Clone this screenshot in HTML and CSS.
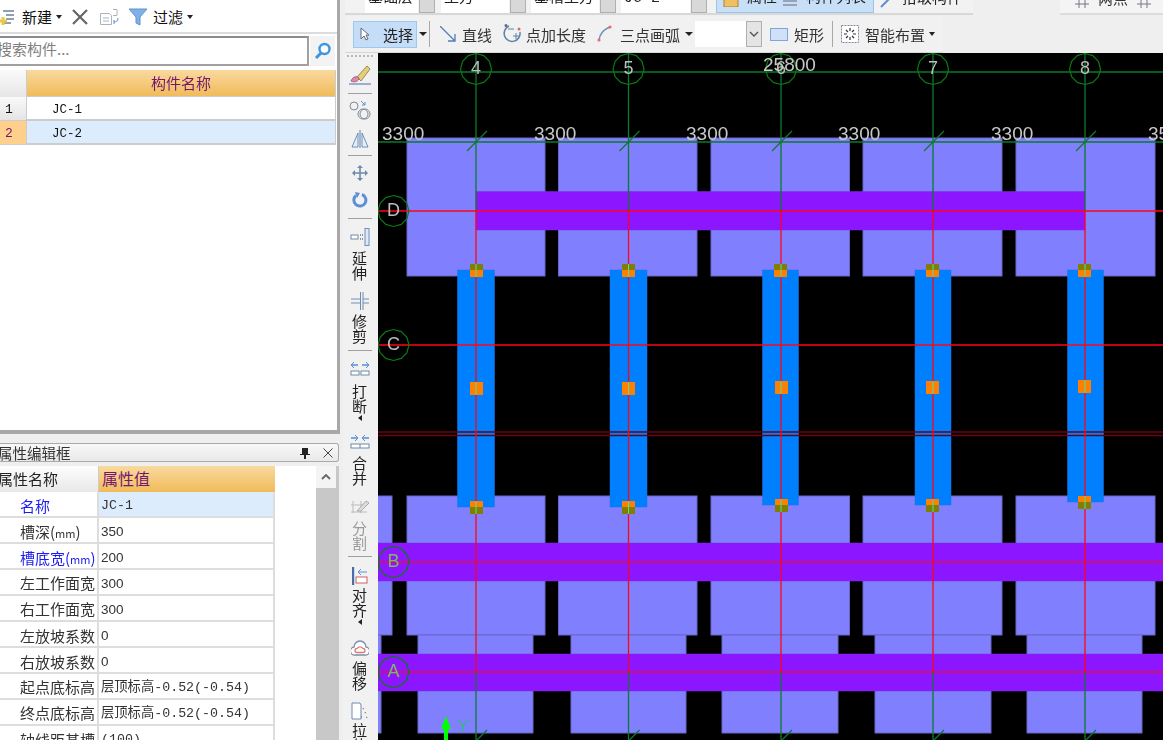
FILE: index.html
```html
<!DOCTYPE html>
<html lang="zh">
<head>
<meta charset="utf-8">
<title>构件</title>
<link rel="stylesheet" href="styles.css">
</head>
<body>
<div class="app">
  <aside class="side">
    <section class="list-panel">
      <div class="list-tools">
        <svg class="ic new-ic" viewBox="0 0 17 20"><path d="M3 4h11M6 8h8M6 12h8M3 16h8" stroke="#6b7f99" stroke-width="1.5"/><path d="M3 10v8M-1 14h8" stroke="#e9c94a" stroke-width="3"/></svg>
        <span class="t new-t">新建</span><i class="caret c-new"></i>
        <svg class="ic del-ic" viewBox="0 0 18 18"><path d="M2 2l14 14M16 2L2 16" stroke="#666" stroke-width="2.2"/></svg>
        <svg class="ic copy-ic" viewBox="0 0 20 18"><path d="M1.500 5.500h9l2 2v9h-11z" fill="#fff" stroke="#aab4c0"/><path d="M4 10h6M4 13h6" stroke="#aab4c0"/><path d="M14 1.500h4v6h-4" fill="none" stroke="#aab4c0"/><path d="M19 10c0 3-2 4-4 4M15 12v4" fill="none" stroke="#5b8fd0"/></svg>
        <svg class="ic filter-ic" viewBox="0 0 18 18"><path d="M0 1h18l-7 8v8l-4-2V9z" fill="#7fb0e6" stroke="#5f93cf"/></svg>
        <span class="t filter-t">过滤</span><i class="caret c-filter"></i>
      </div>
      <div class="search-row">
        <div class="search-box">搜索构件...</div>
        <div class="search-btn"><svg viewBox="0 0 18 18"><circle cx="10.500" cy="7" r="5" fill="#fff" stroke="#3d96e0" stroke-width="2.400"/><path d="M7 11l-5 5" stroke="#3d96e0" stroke-width="3"/></svg></div>
      </div>
      <div class="list-grid">
        <div class="lg-corner"></div><div class="lg-head">构件名称</div>
        <div class="lg-num">1</div><div class="lg-name">JC-1</div>
        <div class="lg-num lg-num-on">2</div><div class="lg-name lg-name-on">JC-2</div>
      </div>
    </section>
    <section class="prop-panel">
      <div class="prop-title"><span class="prop-title-t">属性编辑框</span>
        <svg class="pin" viewBox="0 0 10 12"><path d="M2 1h6v6h2v1H6v4H4V8H0V7h2z" fill="#222"/></svg>
        <svg class="close" viewBox="0 0 10 10"><path d="M.5.500l9 9M9.500.500l-9 9" stroke="#444"/></svg>
      </div>
      <div class="prop-body">
        <div class="prop-table">
          <div class="ph-name">属性名称</div><div class="ph-val">属性值</div>
          <div class="pn blue">名称</div><div class="pv pv-on mono">JC-1</div>
          <div class="pn">槽深(<small>mm</small>)</div><div class="pv">350</div>
          <div class="pn blue">槽底宽(<small>mm</small>)</div><div class="pv">200</div>
          <div class="pn up">左工作面宽</div><div class="pv">300</div>
          <div class="pn up">右工作面宽</div><div class="pv">300</div>
          <div class="pn">左放坡系数</div><div class="pv">0</div>
          <div class="pn">右放坡系数</div><div class="pv">0</div>
          <div class="pn up">起点底标高</div><div class="pv mono">层顶标高-0.52(-0.54)</div>
          <div class="pn up">终点底标高</div><div class="pv mono">层顶标高-0.52(-0.54)</div>
          <div class="pn">轴线距基槽</div><div class="pv mono">(100)</div>
        </div>
        <div class="scrollbar"><div class="sb-up"><svg viewBox="0 0 10 6"><path d="M1 5l4-4 4 4" fill="none" stroke="#666" stroke-width="1.800"/></svg></div><div class="sb-track"></div></div>
      </div>
    </section>
  </aside>
  <main class="main">
    <div class="top-row">
      <div class="top-left">
        <div class="combo c1"><span>基础层</span></div><div class="combo-btn"></div>
        <div class="combo c2"><span>土方</span></div><div class="combo-btn"></div>
        <div class="combo c3"><span>基槽土方</span></div><div class="combo-btn"></div>
        <div class="combo c4"><span>JC-2</span></div><div class="combo-btn"></div>
        <div class="top-sel">
          <svg class="i16" viewBox="0 0 16 12"><rect x="1" y="0" width="14" height="12" fill="#f0c060" stroke="#b08030"/></svg><span class="ts1">属性</span>
          <svg class="i16 ts-ic" viewBox="0 0 16 12"><path d="M1 2h14M1 6h14M1 10h14" stroke="#667"/></svg><span class="ts2">构件列表</span>
        </div>
        <svg class="i16 pick-ic" viewBox="0 0 16 12"><path d="M2 11l10-10" stroke="#5b8fd0" stroke-width="2"/></svg><span class="pick-t">拾取构件</span>
      </div>
      <div class="top-right">
        <svg class="i16" viewBox="0 0 16 12"><path d="M1 3h14M1 8h14M5 0v12M11 0v12" stroke="#778"/></svg><span class="tr1">两点</span>
        <svg class="i16 tr-ic" viewBox="0 0 16 12"><path d="M1 3h14M1 8h14M5 0v12M11 0v12" stroke="#778"/></svg>
      </div>
    </div>
    <div class="draw-tools">
      <div class="select-btn"><svg class="cursor" viewBox="0 0 10 14"><path d="M1 1v11l3-3 2 4 2-1-2-4h3z" fill="#fff" stroke="#667"/></svg><span>选择</span></div>
      <i class="caret c-sel"></i><div class="vsep"></div>
      <svg class="ti line-ic" viewBox="0 0 16 16"><path d="M0 0l15 15M15 8v7H8" fill="none" stroke="#4f7fb5" stroke-width="1.300"/></svg>
      <span class="tt line-t">直线</span>
      <svg class="ti pt-ic" viewBox="0 0 20 20"><path d="M7 2a8 8 0 1 0 11 6" fill="none" stroke="#5f80a8" stroke-width="1.500"/><path d="M6 5h6M11 12h6M14 9v6" stroke="#5f80a8"/><circle cx="4" cy="1.500" r="1.500" fill="#668"/><circle cx="17" cy="5" r="1.500" fill="#d76a6a"/></svg>
      <span class="tt pt-t">点加长度</span>
      <svg class="ti arc-ic" viewBox="0 0 15 18"><path d="M2 15C3 8 7 4 13 2" fill="none" stroke="#6b8fb8" stroke-width="1.400"/><circle cx="2" cy="15" r="1.600" fill="#e07070"/><circle cx="13" cy="2" r="1.600" fill="#e07070"/></svg>
      <span class="tt arc-t">三点画弧</span><i class="caret c-arc"></i>
      <div class="tool-combo"><div class="tool-combo-btn"><svg viewBox="0 0 10 6"><path d="M1 1l4 4 4-4" fill="none" stroke="#555" stroke-width="1.400"/></svg></div></div>
      <svg class="ti rect-ic" viewBox="0 0 18 13"><rect x=".5" y=".5" width="17" height="12" fill="#cfe0f7" stroke="#7fa6d8"/></svg>
      <span class="tt rect-t">矩形</span><div class="vsep vs2"></div>
      <svg class="ti smart-ic" viewBox="0 0 18 18"><rect x=".5" y=".5" width="17" height="17" fill="#fff" stroke="#889" stroke-dasharray="2 1"/><path d="M5 5l2 2M13 5l-2 2M5 13l2-2M13 13l-2-2M9 3v3M9 12v3M3 9h3M12 9h3" stroke="#334" stroke-width="1.200"/></svg>
      <span class="tt smart-t">智能布置</span><i class="caret c-smart"></i>
    </div>
    <div class="work">
      <nav class="vtools">
        <div class="grip"></div>
        <svg class="vi brush" viewBox="0 0 24 20"><path d="M1 19h22" stroke="#7d97c0" stroke-width="1.500"/><path d="M9 12l4 4 9-12-3-3z" fill="#e6cf7a" stroke="#9a8a55"/><path d="M3 16c2-5 6-5 8-3 0 3-4 5-8 3z" fill="#e08aa8" stroke="#a06080"/></svg>
        <div class="vline s1"></div>
        <svg class="vi circles" viewBox="0 0 22 20"><circle cx="5" cy="6" r="4" fill="none" stroke="#7f8a9a"/><circle cx="14" cy="14" r="5" fill="none" stroke="#7f8a9a"/><circle cx="16" cy="14" r="5" fill="none" stroke="#7f8a9a"/><path d="M12 1l4 4M16 2v3h-3" fill="none" stroke="#5b8fd0"/></svg>
        <svg class="vi mirror" viewBox="0 0 18 18"><path d="M9 0v18" stroke="#5f7fa8"/><path d="M7 3v14H1zM11 3v14h6z" fill="#e8eef7" stroke="#6f90b8"/></svg>
        <div class="vline s2"></div>
        <svg class="vi move" viewBox="0 0 16 16"><path d="M8 1v14M1 8h14" stroke="#6f8aa8" stroke-width="1.600"/><path d="M8 0l3 3H5zM8 16l3-3H5zM0 8l3-3v6zM16 8l-3-3v6z" fill="#6f8aa8"/></svg>
        <svg class="vi rotate" viewBox="0 0 16 16"><path d="M10 2.500a6 6 0 1 1-6 1" fill="none" stroke="#5b8fd6" stroke-width="3"/><path d="M3 0l5 1-3 5z" fill="#5b8fd6"/></svg>
        <div class="vline s3"></div>
        <svg class="vi extend" viewBox="0 0 20 18"><rect x="15" y="0.500" width="4" height="17" fill="#dfe9f5" stroke="#6f90b8"/><rect x="1" y="7" width="7" height="4" fill="#fff" stroke="#6f8aa8"/><path d="M10 7h3M10 11h3" stroke="#333" stroke-dasharray="1 1"/></svg>
        <div class="vlabel l1">延伸</div>
        <svg class="vi trim" viewBox="0 0 20 18"><path d="M1 7h9M1 11h9M13 7h6M13 11h6" stroke="#6f90b8"/><path d="M10.500 0v18M13 0v18" stroke="#6f8aa8"/></svg>
        <div class="vlabel l2">修剪</div>
        <div class="vline s4"></div>
        <svg class="vi brk" viewBox="0 0 20 14"><path d="M1 3h7M12 3h7" stroke="#5b8fd6" stroke-width="1.500"/><path d="M4 0L1 3l3 3M16 0l3 3-3 3" fill="none" stroke="#5b8fd6"/><rect x="1" y="9" width="8" height="4" fill="#fff" stroke="#6f8aa8"/><rect x="11" y="9" width="8" height="4" fill="#fff" stroke="#6f8aa8"/></svg>
        <div class="vlabel l3">打断</div>
        <i class="tri t1"></i>
        <svg class="vi merge" viewBox="0 0 20 14"><path d="M1 3h7M12 3h7" stroke="#5b8fd6" stroke-width="1.500"/><path d="M5 0l3 3-3 3M15 0l-3 3 3 3" fill="none" stroke="#5b8fd6"/><rect x="1" y="9" width="18" height="4" fill="#fff" stroke="#6f8aa8"/><path d="M10 9v4" stroke="#6f8aa8"/></svg>
        <div class="vlabel l4">合并</div>
        <svg class="vi split" viewBox="0 0 20 17"><path d="M1 8h16M1 15h16M3 4v12M11 4v12" stroke="#bbb"/><path d="M7 14l9-10 3 2-8 8z" fill="#ddd" stroke="#aaa"/></svg>
        <div class="vlabel l5 dim">分割</div>
        <div class="vline s5"></div>
        <svg class="vi align" viewBox="0 0 16 19"><path d="M1 1v18" stroke="#456fa8" stroke-width="2.400"/><rect x="4" y="11" width="11" height="6" fill="#fff" stroke="#d06060"/><path d="M15 6H6M9 3L6 6l3 3" fill="none" stroke="#5b8fd6"/></svg>
        <div class="vlabel l6">对齐</div>
        <i class="tri t2"></i>
        <svg class="vi offset" viewBox="0 0 18 17"><path d="M4 15a4 4 0 0 1-1-8 6 6 0 0 1 12 0 4 4 0 0 1-1 8z" fill="#fff" stroke="#7a8ea8" stroke-width="1.300"/><path d="M6 12.500a2 2 0 0 1 0-4 3.500 3.500 0 0 1 6 0 2 2 0 0 1 0 4z" fill="none" stroke="#dc7a70" stroke-width="1.300"/></svg>
        <div class="vlabel l7">偏移</div>
        <svg class="vi stretch" viewBox="0 0 18 18"><path d="M1 1h8l1 2v14H1z" fill="#fff" stroke="#6f8aa8"/><path d="M12 6l1 2M14 10l1 2M15 15l2 1M10 15h2" stroke="#556" stroke-dasharray="1 1"/></svg>
        <div class="vlabel l8">拉伸</div>
      </nav>
      <div class="canvas">
        <svg class="cad" viewBox="378 53 785 687" width="785" height="687">
          <defs>
            <polygon id="axis" points="15.500,0 13.400,7.750 7.750,13.400 0,15.500 -7.750,13.400 -13.400,7.750 -15.500,0 -13.400,-7.750 -7.750,-13.400 0,-15.500 7.750,-13.400 13.400,-7.750" fill="none"/>
            <path id="tick" d="M-9 9L11-11"/>
          </defs>
          <rect x="378" y="53" width="785" height="687" fill="#000"/>
          <g class="found">
            <rect x="407" y="138" width="138" height="138"/>
            <rect x="558.500" y="138" width="138.500" height="138"/>
            <rect x="711" y="138" width="138.500" height="138"/>
            <rect x="863" y="138" width="139" height="138"/>
            <rect x="1016" y="138" width="139" height="138"/>
            <rect x="377" y="496" width="15" height="139"/>
            <rect x="407" y="496" width="138" height="139"/>
            <rect x="558.500" y="496" width="138.500" height="139"/>
            <rect x="711" y="496" width="138.500" height="139"/>
            <rect x="863" y="496" width="139" height="139"/>
            <rect x="1016" y="496" width="139" height="139"/>
            <rect x="376" y="635" width="5" height="98"/>
            <rect x="418" y="635" width="115" height="98"/>
            <rect x="571" y="635" width="115" height="98"/>
            <rect x="722" y="635" width="116" height="98"/>
            <rect x="875" y="635" width="116" height="98"/>
            <rect x="1027" y="635" width="115" height="98"/>
          </g>
          <g class="band">
            <rect x="476" y="191.500" width="609" height="38.500"/>
            <rect x="377" y="543" width="787" height="38"/>
            <rect x="377" y="654" width="787" height="37"/>
          </g>
          <g class="col">
            <rect x="457.500" y="270" width="37" height="237"/>
            <rect x="610" y="270" width="37" height="237"/>
            <rect x="762.500" y="270" width="36" height="235"/>
            <rect x="915" y="270" width="36" height="235"/>
            <rect x="1067.500" y="270" width="36" height="232"/>
          </g>
          <g class="dred">
            <path d="M378 432h785M378 435.500h785"/>
          </g>
          <g class="gline">
            <path d="M378 72h785M378 142h785"/>
            <path d="M476 53v158M628.500 53v158M781 53v158M933 53v158M1085 53v158"/>
            <path d="M476 672v68M628.500 672v68M781 672v68M933 672v68M1085 672v68"/>
            <use href="#tick" x="476" y="142"/><use href="#tick" x="628.500" y="142"/><use href="#tick" x="781" y="142"/><use href="#tick" x="933" y="142"/><use href="#tick" x="1085" y="142"/>
            <use href="#tick" x="476" y="741"/><use href="#tick" x="628.500" y="741"/><use href="#tick" x="781" y="741"/><use href="#tick" x="933" y="741"/><use href="#tick" x="1085" y="741"/>
          </g>
          <g class="rline">
            <path d="M378 211h785M378 345h785"/>
            <path d="M476 211v461M628.500 211v461M781 211v461M933 211v461M1085 211v461"/>
          </g>
          <g class="rline2"><path d="M378 562h785M378 672h785"/></g>
          <g class="sq-o">
            <rect x="470" y="270" width="13" height="7"/><rect x="622" y="270" width="13" height="7"/><rect x="774" y="270" width="13" height="7"/><rect x="926" y="270" width="13" height="7"/><rect x="1078" y="270" width="13" height="7"/>
            <rect x="470" y="382" width="13" height="13"/><rect x="622" y="382" width="13" height="13"/><rect x="775" y="381" width="13" height="13"/><rect x="926" y="381" width="13" height="13"/><rect x="1078" y="380" width="13" height="13"/>
            <rect x="470" y="501" width="13" height="6"/><rect x="622" y="501" width="13" height="6"/><rect x="775" y="499" width="13" height="6"/><rect x="926" y="499" width="13" height="6"/><rect x="1078" y="496" width="13" height="6"/>
          </g>
          <g class="sq-k">
            <rect x="470" y="264" width="13" height="6"/><rect x="622" y="264" width="13" height="6"/><rect x="774" y="264" width="13" height="6"/><rect x="926" y="264" width="13" height="6"/><rect x="1078" y="264" width="13" height="6"/>
            <rect x="470" y="507" width="13" height="7"/><rect x="622" y="507" width="13" height="7"/><rect x="775" y="505" width="13" height="7"/><rect x="926" y="505" width="13" height="7"/><rect x="1078" y="502" width="13" height="7"/>
          </g>
          <g class="sq-c">
            <path d="M476 264v13M476 382v13M476 501v13M628.500 264v13M628.500 382v13M628.500 501v13M781 264v13M781 381v13M781 499v13M933 264v13M933 381v13M933 499v13M1085 264v13M1085 380v13M1085 496v13"/>
          </g>
          <g class="ax">
            <use href="#axis" x="476" y="69"/><use href="#axis" x="628.500" y="69"/><use href="#axis" x="781" y="69"/><use href="#axis" x="933" y="69"/><use href="#axis" x="1085" y="69"/>
            <use href="#axis" x="393.500" y="211"/><use href="#axis" x="393.500" y="345"/><use href="#axis" x="393.500" y="562"/><use href="#axis" x="393.500" y="672"/>
          </g>
          <g class="axt">
            <text x="476" y="74">4</text><text x="628.500" y="74">5</text><text x="781" y="74">6</text><text x="933" y="74">7</text><text x="1085" y="74">8</text>
            <text x="393.500" y="216">D</text><text x="393.500" y="350">C</text>
            <text x="393.500" y="567" class="on-band">B</text><text x="393.500" y="677" class="on-band">A</text>
          </g>
          <g class="dim-t">
            <text x="382" y="140">3300</text><text x="534" y="140">3300</text><text x="686" y="140">3300</text><text x="838" y="140">3300</text><text x="991" y="140">3300</text><text x="1148" y="140">3500</text>
            <text x="763" y="71">25800</text>
          </g>
          <path class="y-arrow" d="M446 716l5 13h-3v11h-4v-11h-3z"/>
          <path class="y-mark" d="M458 719l5 7 6-7M463 726l-1 6"/>
        </svg>
      </div>
    </div>
  </main>
</div>
</body>
</html>
```
FILE: styles.css
```css
* { box-sizing: border-box; }
html, body { margin: 0; padding: 0; }
body {
  width: 1163px; height: 740px; overflow: hidden; background: #efefef;
  font-family: "Noto Sans CJK SC", "Liberation Sans", sans-serif;
  font-size: 15px; color: #222;
}
.app { display: flex; width: 1163px; height: 740px; filter: blur(.3px); }
svg { display: block; flex: none; }

/* left column */
.side { width: 340px; height: 740px; flex: none; display: flex; flex-direction: column; overflow: hidden; }
.list-panel { height: 434px; flex: none; background: #fff; border-right: 3px solid #a8a8a8; border-bottom: 4px solid #a8a8a8; }
.list-tools { height: 34px; padding-top: 1px; display: flex; align-items: center; border-bottom: 2px solid #dcdcdc; }
.new-ic { width: 17px; height: 20px; }
.t { line-height: 20px; color: #111; }
.new-t { margin-left: 5px; }
.caret { display: block; flex: none; width: 0; height: 0; border: 3.500px solid transparent; border-top: 4px solid #222; border-bottom: 0; }
.c-new { margin-left: 4px; }
.del-ic { width: 18px; height: 18px; margin-left: 9px; }
.copy-ic { width: 20px; height: 18px; margin-left: 10px; }
.filter-ic { width: 18px; height: 18px; margin-left: 10px; }
.filter-t { margin-left: 6px; }
.c-filter { margin-left: 4px; }
.search-row { display: flex; height: 31px; margin-top: 2px; }
.search-box {
  width: 309px; height: 30px; border: 2px solid #a0a0a0; border-left: 0; border-top-color: #8c8c8c;
  line-height: 22px; color: #808080; text-indent: -3px; overflow: hidden; white-space: nowrap; background: #fff;
}
.search-btn { width: 25px; height: 30px; margin-left: 1px; background: #f3f3f3; display: flex; align-items: center; justify-content: center; }
.search-btn svg { width: 18px; height: 18px; }
.list-grid { display: grid; grid-template-columns: 27px 309px; grid-auto-rows: 24px; grid-template-rows: 27px 24px 24px; margin-top: 3px; }
.lg-corner { background: linear-gradient(#fafafa, #e6e6e6); border-right: 1px solid #ccc; }
.lg-head {
  background: linear-gradient(#f9d99f, #f0bb5a); color: #74166e; text-align: center; line-height: 26px;
  border-bottom: 1px solid #ccc; border-right: 1px solid #ccc;
}
.lg-num { background: linear-gradient(#fafafa, #e4e4e4); font-family: "Liberation Mono", monospace; font-size: 13px; line-height: 26px; padding-left: 5px; border-right: 1px solid #ccc; border-bottom: 1px solid #ccc; color: #111; }
.lg-num-on { background: #ffd08c; color: #74166e; }
.lg-name { font-family: "Liberation Mono", "Noto Sans CJK SC", monospace; font-size: 12.500px; line-height: 26px; padding-left: 25px; border-bottom: 2px solid #ccc; border-right: 1px solid #ccc; color: #111; background: #fff; }
.lg-name-on { background: #ddecfc; }

.prop-panel { flex: 1; min-height: 0; padding-top: 9px; display: flex; flex-direction: column; }
.prop-title {
  height: 19px; flex: none; width: 339px; display: flex; align-items: center; overflow: hidden;
  background: linear-gradient(#f8f8f8, #e9e9e9); border: 1px solid #aaa; border-left: 0; border-radius: 0 3px 3px 0;
}
.prop-title-t { margin-left: -2px; font-size: 14.500px; line-height: 17px; white-space: nowrap; color: #333; }
.pin { width: 10px; height: 12px; margin-left: 229px; }
.close { width: 10px; height: 10px; margin-left: 13px; }
.prop-body { flex: 1; min-height: 0; margin-top: 4px; width: 339px; display: flex; background: #fff; border-right: 3px solid #c8c8c8; overflow: hidden; }
.prop-table { width: 275px; flex: none; display: grid; grid-template-columns: 99px 176px; grid-template-rows: 26px; grid-auto-rows: 26px; }
.ph-name { background: linear-gradient(#fdfdfd, #e8e8e8); text-indent: -2px; line-height: 25px; white-space: nowrap; overflow: hidden; border-right: 1px solid #ccc; }
.ph-val { background: linear-gradient(#f9d99f, #f0bb5a); color: #74166e; padding-left: 3px; font-size: 16px; line-height: 25px; }
.pn { padding-left: 20px; line-height: 28px; white-space: nowrap; overflow: hidden; border-bottom: 2px solid #ddd; border-right: 2px solid #ddd; color: #333; background: #fff; }
.pn.up { line-height: 25px; }
.pn small { font-size: 11px; }
.pn.blue { color: #1c1cf0; }
.pv { padding-left: 2px; font-family: "Liberation Sans", sans-serif; font-size: 13.500px; line-height: 28px; white-space: nowrap; overflow: hidden; border-bottom: 2px solid #ddd; border-right: 2px solid #ddd; color: #333; background: #fff; }
.pv-on { background: #ddecfc; }
.mono { font-family: "Liberation Mono", "Noto Sans CJK SC", monospace; font-size: 13.300px; }
.scrollbar { width: 20px; margin-left: 41px; flex: none; display: flex; flex-direction: column; }
.sb-up { height: 22px; display: flex; align-items: center; justify-content: center; background: #f4f4f4; }
.sb-up svg { width: 10px; height: 6px; }
.sb-track { flex: 1; background: #c8c8c8; }

/* main column */
.main { flex: 1; min-width: 0; height: 740px; display: flex; flex-direction: column; }
.top-row { height: 15px; flex: none; display: flex; justify-content: space-between; overflow: hidden; }
.top-left { width: 628px; margin-left: 5px; padding-left: 20px; display: flex; align-items: flex-end; height: 15px; background: #f2f2f2; border-bottom: 2px solid #d8d8d8; overflow: hidden; }
.combo { height: 13px; background: #fff; overflow: hidden; display: flex; align-items: flex-end; }
.combo span { display: block; line-height: 20px; padding-left: 3px; white-space: nowrap; margin-bottom: 7px; }
.c1 { width: 53px; }
.c2 { width: 68px; margin-left: 6px; }
.c3 { width: 68px; margin-left: 5px; }
.c4 { width: 69px; margin-left: 5px; font-family: "Liberation Mono", monospace; }
.c4 span { margin-bottom: 4px; }
.combo-btn { width: 16px; height: 13px; margin-left: 1px; background: #d8d8d8; border: 1px solid #b0b0b0; border-top: 0; }
.top-sel { width: 158px; height: 13px; margin-left: 9px; display: flex; align-items: flex-end; padding-left: 6px; background: #c7dff7; border: 1px solid #9cc5ee; border-top: 0; overflow: hidden; }
.i16 { width: 16px; height: 12px; margin-bottom: 5px; }
.ts1 { margin-left: 8px; line-height: 20px; white-space: nowrap; margin-bottom: 6px; }
.ts-ic { margin-left: 5px; }
.ts2 { margin-left: 8px; line-height: 20px; white-space: nowrap; margin-bottom: 6px; }
.pick-ic { margin-left: 5px; }
.pick-t { margin-left: 7px; line-height: 20px; white-space: nowrap; margin-bottom: 6px; }
.top-right { width: 103px; height: 15px; display: flex; align-items: flex-end; padding-left: 14px; background: #f4f4f4; border-bottom: 2px solid #dcdcdc; overflow: hidden; }
.tr1 { margin-left: 8px; line-height: 20px; white-space: nowrap; color: #333; margin-bottom: 5px; }
.tr-ic { margin-left: 8px; }

.draw-tools { width: 598px; height: 37px; flex: none; margin-left: 5px; margin-top: 1px; padding-left: 8px; display: flex; align-items: center; background: #f1f1f1; border-bottom: 1px solid #d6d6d6; }
.select-btn { width: 64px; height: 27px; display: flex; align-items: center; background: #c5ddf6; border: 1px solid #9cc8f0; }
.cursor { width: 10px; height: 14px; margin-left: 6px; }
.select-btn span { margin-left: 13px; line-height: 20px; padding-top: 1px; }
.c-sel { margin-left: 2px; border-width: 4px; border-top-width: 4px; }
.vsep { width: 1px; height: 26px; margin-left: 2px; background: #a8a8a8; }
.ti { flex: none; }
.tt { line-height: 20px; white-space: nowrap; color: #333; padding-top: 1px; }
.line-ic { width: 16px; height: 16px; margin-left: 10px; }
.line-t { margin-left: 6px; }
.pt-ic { width: 20px; height: 20px; margin-left: 10px; }
.pt-t { margin-left: 4px; }
.arc-ic { width: 15px; height: 18px; margin-left: 11px; }
.arc-t { margin-left: 8px; }
.c-arc { margin-left: 5px; border-width: 4px; }
.tool-combo { width: 67px; height: 26px; margin-left: 2px; background: #fff; display: flex; justify-content: flex-end; }
.tool-combo-btn { width: 16px; height: 26px; background: #e4e4e4; border: 1px solid #b0b0b0; display: flex; align-items: center; justify-content: center; }
.tool-combo-btn svg { width: 10px; height: 6px; }
.rect-ic { width: 18px; height: 13px; margin-left: 8px; }
.rect-t { margin-left: 6px; }
.vs2 { margin-left: 8px; }
.smart-ic { width: 18px; height: 18px; margin-left: 8px; }
.smart-t { margin-left: 6px; }
.c-smart { margin-left: 4px; }

.work { flex: 1; min-height: 0; display: flex; }
.vtools { width: 35px; margin-left: 3px; padding-right: 2px; height: 687px; flex: none; display: flex; flex-direction: column; align-items: center; background: #f1f1f1; overflow: hidden; }
.grip { width: 26px; height: 3px; margin-top: 2px; flex: none; border-top: 2px dotted #b8b8b8; }
.vi { flex: none; }
.vline { width: 24px; height: 1px; flex: none; background: #a0a0a0; }
.vlabel { width: 15px; flex: none; font-size: 15px; line-height: 15px; color: #222; text-align: center; }
.vlabel.dim { color: #999; }
.tri { display: block; flex: none; width: 0; height: 0; border: 3px solid transparent; border-right: 4px solid #222; border-left: 0; }
.brush { width: 24px; height: 20px; margin-top: 7px; }
.s1 { margin-top: 8px; }
.circles { width: 22px; height: 20px; margin-top: 6px; }
.mirror { width: 18px; height: 18px; margin-top: 10px; }
.s2 { margin-top: 7px; }
.move { width: 16px; height: 16px; margin-top: 9px; }
.rotate { width: 16px; height: 16px; margin-top: 11px; }
.s3 { margin-top: 10px; }
.extend { width: 20px; height: 18px; margin-top: 9px; }
.l1 { margin-top: 4px; }
.trim { width: 20px; height: 18px; margin-top: 12px; }
.l2 { margin-top: 3px; }
.s4 { margin-top: 7px; }
.brk { width: 20px; height: 14px; margin-top: 11px; }
.l3 { margin-top: 7px; }
.t1 { margin-top: 2px; }
.merge { width: 20px; height: 14px; margin-top: 14px; }
.l4 { margin-top: 6px; }
.split { width: 20px; height: 17px; margin-top: 12px; }
.l5 { margin-top: 6px; }
.s5 { margin-top: 6px; }
.align { width: 16px; height: 19px; margin-top: 9px; }
.l6 { margin-top: 2px; }
.t2 { margin-top: 2px; }
.offset { width: 18px; height: 17px; margin-top: 15px; }
.l7 { margin-top: 3px; }
.stretch { width: 18px; height: 18px; margin-top: 12px; }
.l8 { margin-top: 2px; }

/* drawing */
.canvas { width: 785px; height: 687px; flex: none; overflow: hidden; }
.found rect { fill: #8080ff; stroke: #6a66c8; stroke-width: 1; }
.band rect { fill: #8b16ff; stroke: #7a30e0; stroke-width: .5; }
.col rect { fill: #0080ff; stroke: #2070e0; stroke-width: .5; }
.dred path { stroke: #6c0010; stroke-width: 1.500; fill: none; }
.gline path, .gline use { stroke: #0b7a2a; stroke-width: 1.300; fill: none; }
.rline path { stroke: #ff0418; stroke-width: 1.300; fill: none; }
.rline2 path { stroke: #e0104a; stroke-width: 1.300; fill: none; }
.sq-o rect { fill: #ff8000; }
.sq-k rect { fill: #808000; }
.sq-c path { stroke: #50e0a0; stroke-width: 1; fill: none; }
.ax use { stroke: #0b7a12; stroke-width: 1.200; }
.axt text { font-family: "Liberation Sans", sans-serif; font-size: 18px; fill: #bdbdbd; text-anchor: middle; }
.axt .on-band { fill: #80b860; }
.dim-t text { font-family: "Liberation Sans", sans-serif; font-size: 19px; fill: #c8c8c8; }
.y-arrow { fill: #00ff00; }
.y-mark { stroke: #00d840; stroke-width: 1; fill: none; }
```
